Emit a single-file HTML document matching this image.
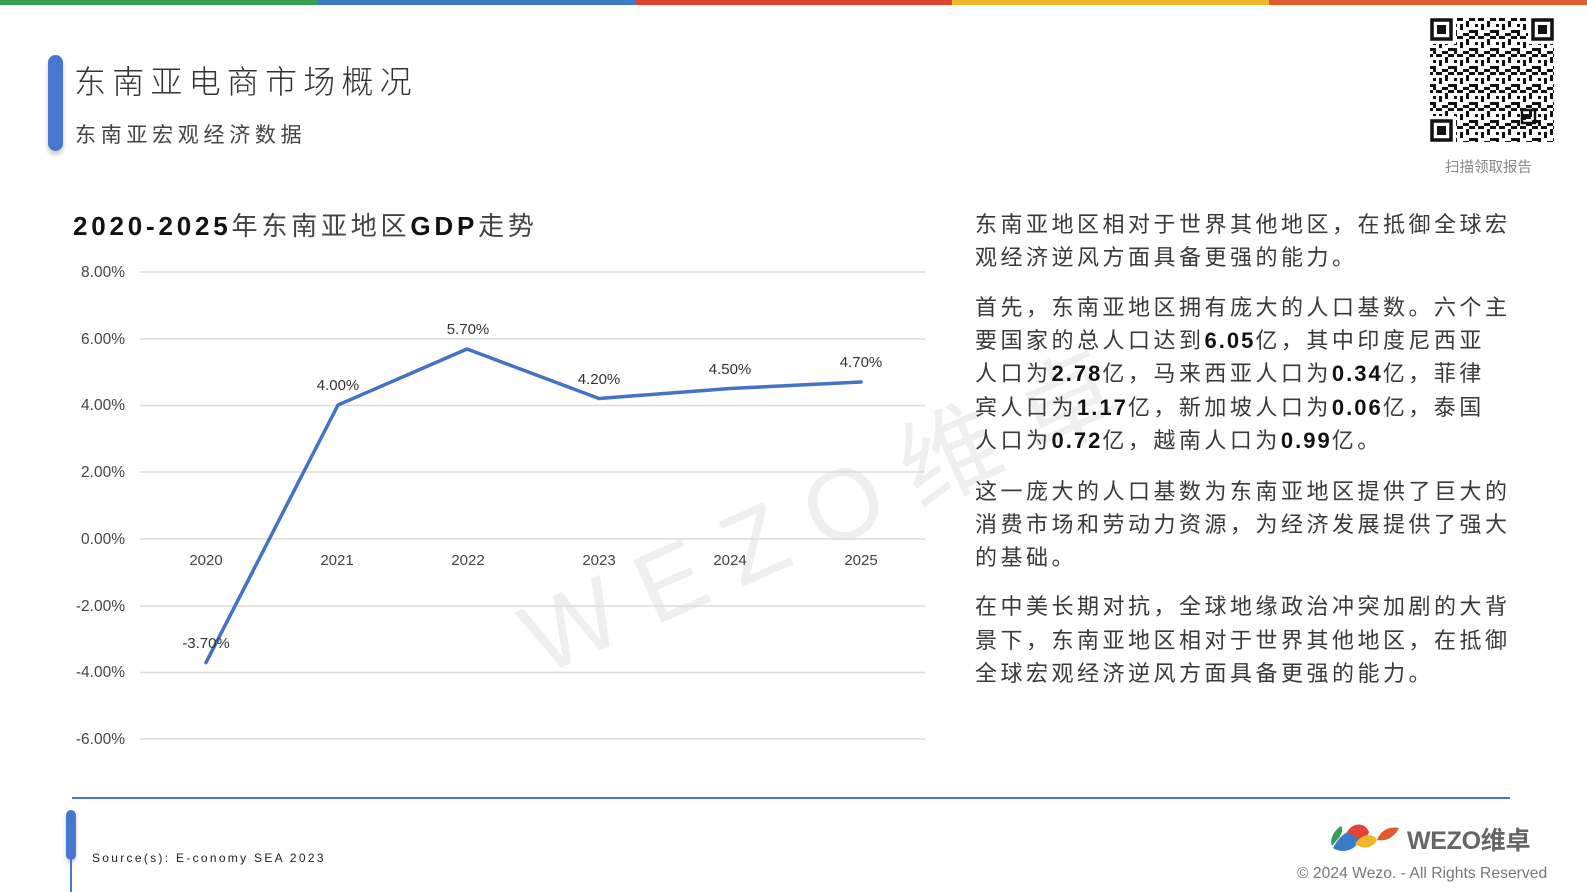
<!DOCTYPE html>
<html><head><meta charset="utf-8"><style>
*{margin:0;padding:0;box-sizing:border-box}
body{width:1587px;height:892px;overflow:hidden;background:#fff;position:relative;font-family:"Liberation Sans","Noto Sans CJK SC",sans-serif;color:#333}
.a{position:absolute;white-space:nowrap}
.t{font-size:22px;letter-spacing:3.5px;color:#3a3a3a;line-height:32px;left:975px}
.t b{font-family:"Liberation Sans",sans-serif;font-weight:bold;color:#111;letter-spacing:2px}
</style></head><body>
<div class="a" style="left:0;top:0;width:318px;height:5px;background:#34a052"></div>
<div class="a" style="left:318px;top:0;width:317px;height:5px;background:#3c7cc6"></div>
<div class="a" style="left:635px;top:0;width:317px;height:5px;background:#df4437"></div>
<div class="a" style="left:952px;top:0;width:317px;height:5px;background:#f1b72a"></div>
<div class="a" style="left:1269px;top:0;width:318px;height:5px;background:#e05b30"></div>

<div class="a" style="left:48px;top:55px;width:15px;height:96px;border-radius:8px;background:#4877d0;box-shadow:0 4px 5px rgba(0,0,0,.2)"></div>
<div class="a" style="left:74px;top:57px;font-size:32px;letter-spacing:6.2px;color:#333;font-weight:300">东南亚电商市场概况</div>
<div class="a" style="left:75px;top:119px;font-size:21px;letter-spacing:4.7px;color:#444">东南亚宏观经济数据</div>

<svg class="a" style="left:1430px;top:18px" width="124" height="124" viewBox="0 0 124 124">
<defs><pattern id="q" width="21" height="18" patternUnits="userSpaceOnUse">
<rect x="0" y="0" width="3" height="3" fill="#111"/><rect x="6" y="0" width="6" height="3" fill="#111"/><rect x="15" y="3" width="3" height="6" fill="#111"/><rect x="3" y="6" width="3" height="3" fill="#111"/><rect x="9" y="6" width="3" height="6" fill="#111"/><rect x="0" y="12" width="6" height="3" fill="#111"/><rect x="18" y="12" width="3" height="3" fill="#111"/><rect x="12" y="15" width="6" height="3" fill="#111"/><rect x="3" y="15" width="3" height="3" fill="#111"/><rect x="18" y="0" width="3" height="3" fill="#111"/></pattern></defs>
<rect width="124" height="124" fill="url(#q)"/>
<g fill="#fff"><rect x="0" y="0" width="26" height="26"/><rect x="98" y="0" width="26" height="26"/><rect x="0" y="98" width="26" height="26"/></g>
<g fill="none" stroke="#111" stroke-width="3.5"><rect x="2" y="2" width="19" height="19"/><rect x="103" y="2" width="19" height="19"/><rect x="2" y="103" width="19" height="19"/><rect x="92" y="92" width="13" height="13" stroke-width="2.5"/></g>
<g fill="#111"><rect x="7" y="7" width="9" height="9"/><rect x="108" y="7" width="9" height="9"/><rect x="7" y="108" width="9" height="9"/><rect x="96" y="96" width="5" height="5"/></g>
</svg>
<div class="a" style="left:1445px;top:156px;font-size:14.5px;color:#888">扫描领取报告</div>

<div class="a" style="left:73px;top:206px;font-size:26px;color:#111;letter-spacing:3.8px"><b style="font-family:'Liberation Sans',sans-serif">2020-2025</b><span style="color:#444">年东南亚地区</span><b style="font-family:'Liberation Sans',sans-serif">GDP</b><span style="color:#444">走势</span></div>

<div class="a" style="left:495px;top:570px;font-size:100px;color:#efefef;letter-spacing:28px;transform:rotate(-24deg);transform-origin:0 0;font-family:'Liberation Sans','Noto Sans CJK SC',sans-serif">WEZO维卓</div>

<svg class="a" style="left:0;top:0" width="940" height="780">
<g stroke="#dcdcdc" stroke-width="1.5">
<line x1="140" x2="925" y1="272" y2="272"/><line x1="140" x2="925" y1="339" y2="339"/><line x1="140" x2="925" y1="405.5" y2="405.5"/><line x1="140" x2="925" y1="472" y2="472"/><line x1="140" x2="925" y1="539" y2="539"/><line x1="140" x2="925" y1="606" y2="606"/><line x1="140" x2="925" y1="672.5" y2="672.5"/><line x1="140" x2="925" y1="739" y2="739"/></g>
<g font-family="Liberation Sans,sans-serif" font-size="15.5" fill="#444" text-anchor="end">
<text x="125" y="277">8.00%</text><text x="125" y="344">6.00%</text><text x="125" y="410">4.00%</text><text x="125" y="477">2.00%</text><text x="125" y="544">0.00%</text><text x="125" y="611">-2.00%</text><text x="125" y="677">-4.00%</text><text x="125" y="744">-6.00%</text></g>
<g font-family="Liberation Sans,sans-serif" font-size="15" fill="#444" text-anchor="middle">
<text x="206" y="565">2020</text><text x="337" y="565">2021</text><text x="468" y="565">2022</text><text x="599" y="565">2023</text><text x="730" y="565">2024</text><text x="861" y="565">2025</text></g>
<polyline points="206,662.6 338,405 467,349 599,398.5 730,388.5 861,382" fill="none" stroke="#4472c4" stroke-width="3.5" stroke-linejoin="round" stroke-linecap="round"/>
<g font-family="Liberation Sans,sans-serif" font-size="15" fill="#333" text-anchor="middle">
<text x="206" y="648">-3.70%</text><text x="338" y="390">4.00%</text><text x="468" y="334">5.70%</text><text x="599" y="384">4.20%</text><text x="730" y="374">4.50%</text><text x="861" y="367">4.70%</text></g>
</svg>

<div class="a t" style="top:209px">东南亚地区相对于世界其他地区，在抵御全球宏</div>
<div class="a t" style="top:242px">观经济逆风方面具备更强的能力。</div>
<div class="a t" style="top:292px">首先，东南亚地区拥有庞大的人口基数。六个主</div>
<div class="a t" style="top:325px">要国家的总人口达到<b>6.05</b>亿，其中印度尼西亚</div>
<div class="a t" style="top:358px">人口为<b>2.78</b>亿，马来西亚人口为<b>0.34</b>亿，菲律</div>
<div class="a t" style="top:392px">宾人口为<b>1.17</b>亿，新加坡人口为<b>0.06</b>亿，泰国</div>
<div class="a t" style="top:425px">人口为<b>0.72</b>亿，越南人口为<b>0.99</b>亿。</div>
<div class="a t" style="top:476px">这一庞大的人口基数为东南亚地区提供了巨大的</div>
<div class="a t" style="top:509px">消费市场和劳动力资源，为经济发展提供了强大</div>
<div class="a t" style="top:542px">的基础。</div>
<div class="a t" style="top:591px">在中美长期对抗，全球地缘政治冲突加剧的大背</div>
<div class="a t" style="top:625px">景下，东南亚地区相对于世界其他地区，在抵御</div>
<div class="a t" style="top:658px">全球宏观经济逆风方面具备更强的能力。</div>

<div class="a" style="left:72px;top:797px;width:1438px;height:2px;background:#4a76cf"></div>
<div class="a" style="left:66px;top:810px;width:10px;height:50px;border-radius:5px;background:#4877d0;box-shadow:0 3px 4px rgba(0,0,0,.2)"></div>
<div class="a" style="left:70px;top:855px;width:2px;height:37px;background:#4877d0"></div>
<div class="a" style="left:92px;top:851px;font-size:12px;letter-spacing:2.3px;color:#222">Source(s): E-conomy SEA 2023</div>

<svg class="a" style="left:1329px;top:818px" width="76" height="34" viewBox="0 0 76 34">
<path d="M3,28 C0,20 6,12 12,8 C15,12 12,18 8,22 Z" fill="#34a052"/>
<path d="M4,30 C10,18 20,10 28,14 C34,18 30,26 24,30 C18,34 10,34 4,30 Z" fill="#3c7cc6"/>
<path d="M18,14 C24,4 36,4 40,14 C38,20 32,22 28,20 Z" fill="#df4437"/>
<path d="M26,26 C32,16 44,14 48,22 C44,30 34,32 26,26 Z" fill="#f1b72a"/>
<path d="M48,22 C52,12 60,8 70,10 C66,18 58,24 48,22 Z" fill="#e05b30"/>
</svg>
<div class="a" style="left:1407px;top:821px;font-size:25px;font-weight:bold;color:#666;letter-spacing:-0.3px">WEZO维卓</div>
<div class="a" style="left:1297px;top:865px;font-size:15.7px;color:#777">© 2024 Wezo. - All Rights Reserved</div>
</body></html>
